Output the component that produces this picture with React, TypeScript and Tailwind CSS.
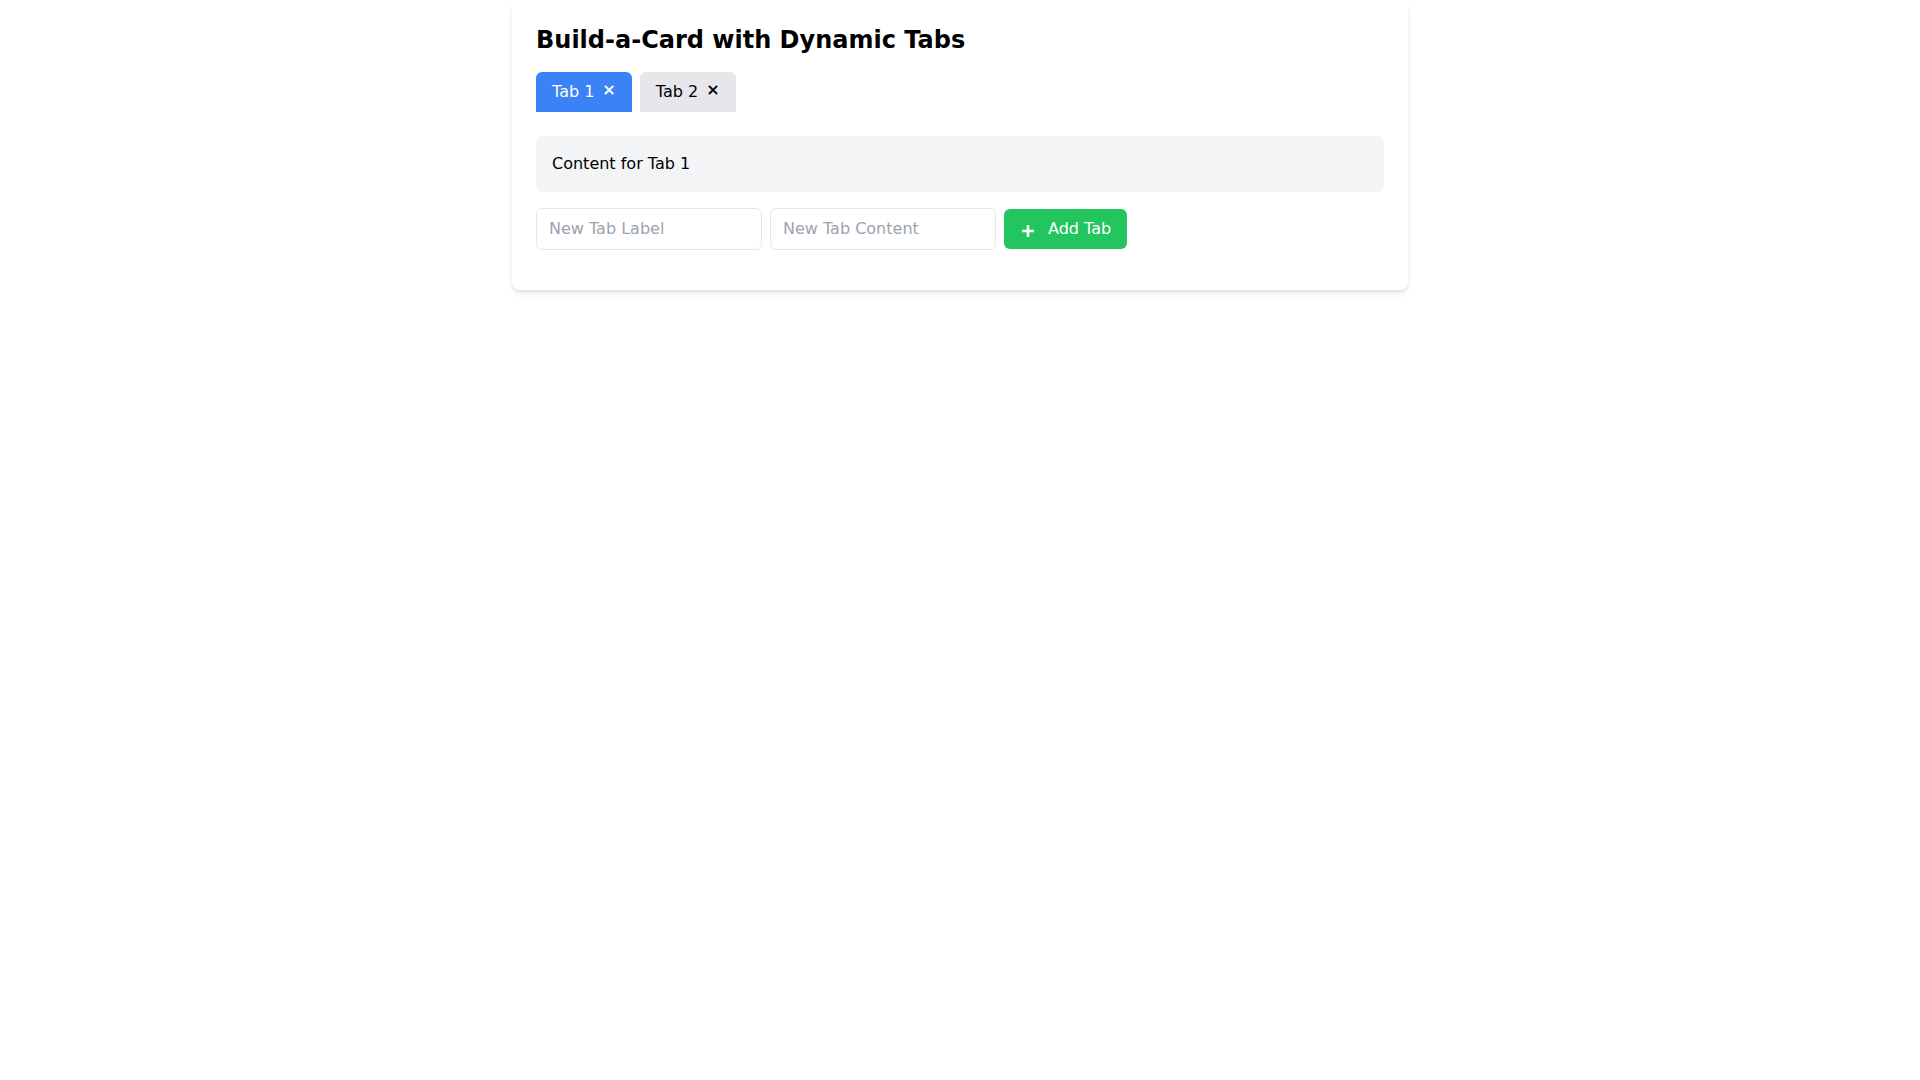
import { useState } from "react";

type Tab = {
  id: number;
  label: string;
  content: string;
};

const initialTabs: Tab[] = [
  { id: 1, label: "Tab 1", content: "Content for Tab 1" },
  { id: 2, label: "Tab 2", content: "Content for Tab 2" },
];

function PlusIcon() {
  return (
    <svg
      viewBox="0 0 16 16"
      className="w-4 h-4 mr-3 mt-1 shrink-0"
      fill="none"
      stroke="currentColor"
      strokeWidth={2.6}
    >
      <path d="M8 2v12M2 8h12" />
    </svg>
  );
}

export default function App() {
  const [tabs, setTabs] = useState<Tab[]>(initialTabs);
  const [activeId, setActiveId] = useState<number>(1);
  const [newLabel, setNewLabel] = useState("");
  const [newContent, setNewContent] = useState("");

  const activeTab = tabs.find((t) => t.id === activeId);

  function addTab() {
    if (!newLabel.trim()) return;
    const id = Date.now();
    setTabs([...tabs, { id, label: newLabel, content: newContent }]);
    setActiveId(id);
    setNewLabel("");
    setNewContent("");
  }

  function removeTab(id: number) {
    const rest = tabs.filter((t) => t.id !== id);
    setTabs(rest);
    if (id === activeId && rest.length > 0) setActiveId(rest[0].id);
  }

  return (
    <div className="min-h-screen bg-white font-['DejaVu_Sans',sans-serif] text-black">
      <div className="max-w-4xl mx-auto bg-white rounded-lg shadow-md p-6 pb-10">
        <h1 className="text-2xl font-bold mb-4">Build-a-Card with Dynamic Tabs</h1>

        <div className="flex gap-2 mb-6">
          {tabs.map((tab) => {
            const active = tab.id === activeId;
            return (
              <div
                key={tab.id}
                onClick={() => setActiveId(tab.id)}
                className={
                  active
                    ? "flex items-center h-10 px-4 rounded-t-md cursor-pointer bg-[#3b82f6] text-white"
                    : "flex items-center h-10 px-4 rounded-t-md cursor-pointer bg-[#e5e7eb] text-black"
                }
              >
                <span>{tab.label}</span>
                <button
                  onClick={(e) => {
                    e.stopPropagation();
                    removeTab(tab.id);
                  }}
                  className="ml-2 mb-1 font-bold leading-4"
                >
                  ×
                </button>
              </div>
            );
          })}
        </div>

        <div className="bg-[#f3f4f6] rounded-lg p-4 mb-4">
          {activeTab ? activeTab.content : "No tabs"}
        </div>

        <div className="flex gap-2">
          <input
            value={newLabel}
            onChange={(e) => setNewLabel(e.target.value)}
            placeholder="New Tab Label"
            className="w-[226px] border border-[#e5e7eb] rounded-md px-3 py-2 placeholder:text-[#9ca3af] outline-none"
          />
          <input
            value={newContent}
            onChange={(e) => setNewContent(e.target.value)}
            placeholder="New Tab Content"
            className="w-[226px] border border-[#e5e7eb] rounded-md px-3 py-2 placeholder:text-[#9ca3af] outline-none"
          />
          <button
            onClick={addTab}
            className="flex items-center h-10 mt-px px-4 rounded-md bg-[#22c55e] text-white"
          >
            <PlusIcon />
            Add Tab
          </button>
        </div>
      </div>
    </div>
  );
}
